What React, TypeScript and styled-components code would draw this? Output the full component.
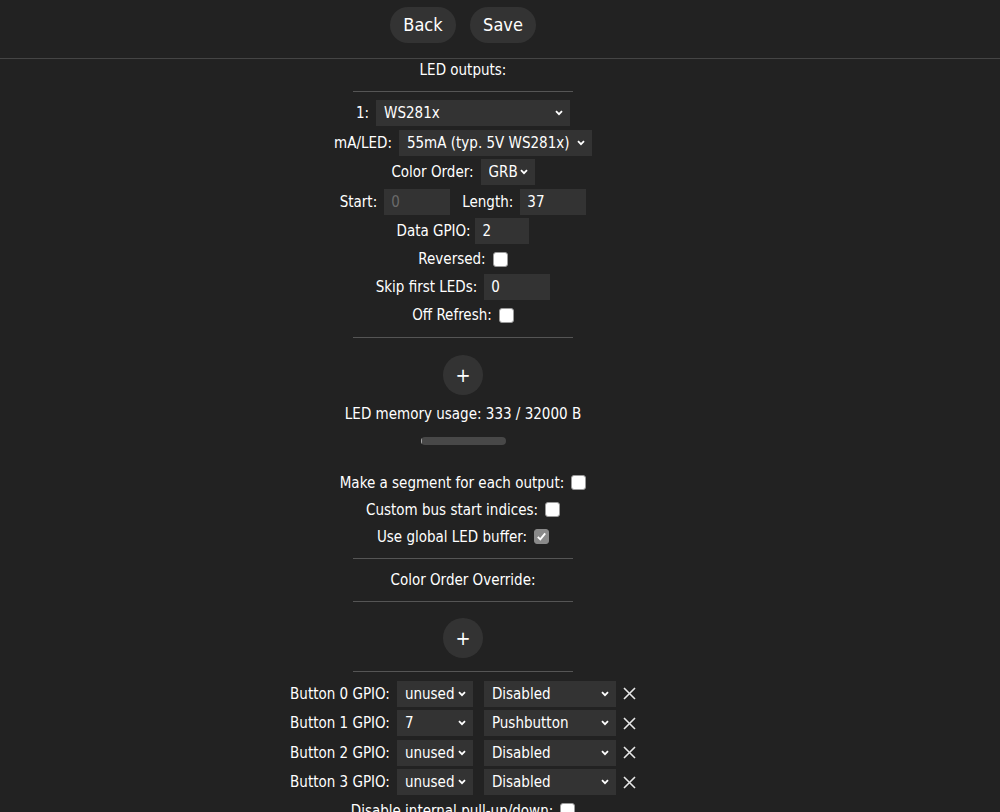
import React from 'react'
import styled, { createGlobalStyle } from 'styled-components'

const GlobalStyle = createGlobalStyle`
  html, body {
    margin: 0;
    padding: 0;
    background: #222;
  }
  body {
    color: #fff;
    font-family: 'DejaVu Sans Condensed', 'DejaVu Sans', Verdana, sans-serif;
    font-stretch: condensed;
    font-size: 15px;
    overflow: hidden;
  }
`

const Chevron = () => (
  <ChevronIcon width="8" height="6" viewBox="0 0 8 6">
    <path d="M1 1.2 L4 4.2 L7 1.2" fill="none" stroke="#fff" strokeWidth="1.8" />
  </ChevronIcon>
)

const RemoveIcon = () => (
  <CrossIcon width="13" height="13" viewBox="0 0 13 13">
    <path d="M1 1 L12 12 M12 1 L1 12" stroke="#e8e8e8" strokeWidth="1.6" />
  </CrossIcon>
)

type DropdownProps = { width: number; value: string; ml?: number }

const Dropdown: React.FC<DropdownProps> = ({ width, value, ml }) => (
  <SelectWrap $w={width} $ml={ml}>
    <NativeSelect defaultValue={value}>
      <option value={value}>{value}</option>
    </NativeSelect>
    <Chevron />
  </SelectWrap>
)

const Check: React.FC<{ checked?: boolean }> = ({ checked }) => (
  <CheckBox $checked={checked}>
    {checked && (
      <svg width="11" height="11" viewBox="0 0 11 11">
        <path d="M1.8 5.8 L4.3 8.3 L9.2 2.4" fill="none" stroke="#fff" strokeWidth="1.9" />
      </svg>
    )}
  </CheckBox>
)

const buttons = [
  { pin: 'unused', type: 'Disabled' },
  { pin: '7', type: 'Pushbutton' },
  { pin: 'unused', type: 'Disabled' },
  { pin: 'unused', type: 'Disabled' },
]

export default function App() {
  const memUsed = 333
  const memMax = 32000

  return (
    <>
      <GlobalStyle />
      <TopBar>
        <TopRow>
          <TopButton>Back</TopButton>
          <TopButton>Save</TopButton>
        </TopRow>
      </TopBar>
      <Page>
        <TextLine>LED outputs:</TextLine>
        <Divider $mt={10} />

        <Block $mt={6.5}>
          <Row>
            <Label>1:</Label>
            <Dropdown width={194} value="WS281x" />
          </Row>
          <Row>
            <Label>mA/LED:</Label>
            <Dropdown width={193} value="55mA (typ. 5V WS281x)" />
          </Row>
          <Row>
            <Label>Color Order:</Label>
            <Dropdown width={54} value="GRB" />
          </Row>
          <Row>
            <Label>Start:</Label>
            <TextInput $w={66} defaultValue="0" disabled />
            <Label $ml={5}>Length:</Label>
            <TextInput $w={66} defaultValue="37" />
          </Row>
          <Row>
            <Label>Data GPIO:</Label>
            <TextInput $w={54} $gap={2} defaultValue="2" />
          </Row>
          <Row $h={26.5}>
            <Label>Reversed:</Label>
            <Check />
          </Row>
          <Row>
            <Label>Skip first LEDs:</Label>
            <TextInput $w={66} defaultValue="0" />
          </Row>
          <Row $h={26.5}>
            <Label>Off Refresh:</Label>
            <Check />
          </Row>
        </Block>
        <Divider $mt={8.5} />

        <AddButton $mt={17}>+</AddButton>
        <TextLine $mt={8}>
          LED memory usage: {memUsed} / {memMax} B
        </TextLine>
        <UsageBar>
          <UsageFill style={{ width: `${Math.max(2, (memUsed / memMax) * 100)}%` }} />
        </UsageBar>

        <Block $mt={24}>
          <Row $h={27}>
            <Label>Make a segment for each output:</Label>
            <Check />
          </Row>
          <Row $h={27}>
            <Label>Custom bus start indices:</Label>
            <Check />
          </Row>
          <Row $h={27}>
            <Label>Use global LED buffer:</Label>
            <Check checked />
          </Row>
        </Block>
        <Divider $mt={7.5} />
        <TextLine $mt={10}>Color Order Override:</TextLine>
        <Divider $mt={10} />
        <AddButton $mt={16}>+</AddButton>
        <Divider $mt={13} />

        <Block $mt={7.5}>
          {buttons.map((b, i) => (
            <Row key={i}>
              <Label>Button {i} GPIO:</Label>
              <Dropdown width={76} value={b.pin} />
              <Dropdown width={132} value={b.type} ml={4} />
              <RemoveIcon />
            </Row>
          ))}
          <Row $h={27}>
            <Label>Disable internal pull-up/down:</Label>
            <Check />
          </Row>
        </Block>
      </Page>
    </>
  )
}

const TopBar = styled.div`
  width: 100%;
  height: 58px;
  border-bottom: 1px solid #454545;
  box-sizing: content-box;
`

const TopRow = styled.div`
  width: 926px;
  display: flex;
  justify-content: center;
  gap: 14px;
  padding-top: 7px;
`

const TopButton = styled.button`
  height: 36px;
  width: 66px;
  padding: 0;
  border: none;
  border-radius: 18px;
  background: #333;
  color: #fff;
  font-family: inherit;
  font-stretch: condensed;
  font-size: 18px;
  line-height: 36px;
  cursor: pointer;
`

const Page = styled.div`
  width: 926px;
  display: flex;
  flex-direction: column;
  align-items: center;
`

const TextLine = styled.div<{ $mt?: number }>`
  height: 22px;
  line-height: 22px;
  margin-top: ${(p) => p.$mt ?? 0}px;
  white-space: nowrap;
`

const Divider = styled.div<{ $mt?: number }>`
  width: 220px;
  height: 1px;
  background: #555;
  margin-top: ${(p) => p.$mt ?? 0}px;
`

const Block = styled.div<{ $mt?: number }>`
  display: flex;
  flex-direction: column;
  align-items: center;
  margin-top: ${(p) => p.$mt ?? 0}px;
`

const Row = styled.div<{ $h?: number }>`
  height: ${(p) => p.$h ?? 29.5}px;
  display: flex;
  align-items: center;
  justify-content: center;
  gap: 7px;
  white-space: nowrap;
`

const Label = styled.span<{ $ml?: number }>`
  margin-left: ${(p) => p.$ml ?? 0}px;
`

const SelectWrap = styled.span<{ $w: number; $ml?: number }>`
  position: relative;
  display: inline-flex;
  width: ${(p) => p.$w}px;
  height: 26px;
  margin-left: ${(p) => p.$ml ?? 0}px;
`

const NativeSelect = styled.select`
  appearance: none;
  width: 100%;
  height: 100%;
  margin: 0;
  padding: 0 10px 0 8px;
  border: none;
  border-radius: 0;
  background: #333;
  color: #fff;
  font-family: inherit;
  font-stretch: condensed;
  font-size: 15px;
  outline: none;
`

const ChevronIcon = styled.svg`
  position: absolute;
  right: 7px;
  top: 10px;
  pointer-events: none;
`

const CrossIcon = styled.svg`
  flex: none;
`

const TextInput = styled.input<{ $w: number; $gap?: number }>`
  width: ${(p) => p.$w}px;
  height: 26px;
  box-sizing: border-box;
  margin: 0;
  margin-left: ${(p) => -(p.$gap ?? 0)}px;
  padding: 0 7px;
  border: none;
  background: #333;
  color: #fff;
  font-family: inherit;
  font-stretch: condensed;
  font-size: 15px;
  outline: none;

  &:disabled {
    color: #6a6a6a;
  }
`

const CheckBox = styled.span<{ $checked?: boolean }>`
  display: inline-flex;
  align-items: center;
  justify-content: center;
  width: 15px;
  height: 15px;
  box-sizing: border-box;
  border-radius: 3px;
  border: 1px solid ${(p) => (p.$checked ? '#8a8a8a' : '#9a9a9a')};
  background: ${(p) => (p.$checked ? '#8a8a8a' : '#fff')};
`

const AddButton = styled.button<{ $mt?: number }>`
  width: 40px;
  height: 40px;
  margin-top: ${(p) => p.$mt ?? 0}px;
  padding: 0;
  border: none;
  border-radius: 50%;
  background: #333;
  color: #fff;
  font-family: inherit;
  font-size: 20px;
  line-height: 40px;
  cursor: pointer;
`

const UsageBar = styled.div`
  width: 85px;
  height: 8px;
  margin-top: 12px;
  border-radius: 4px;
  background: #484848;
  overflow: hidden;
`

const UsageFill = styled.div`
  height: 100%;
  background: #aaa;
`
